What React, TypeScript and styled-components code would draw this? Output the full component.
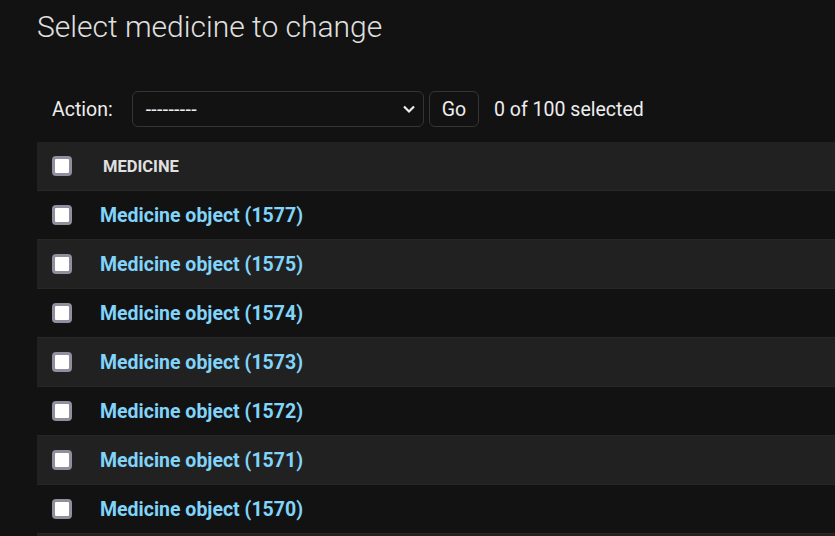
import React from "react";
import styled, { createGlobalStyle } from "styled-components";

const GlobalStyle = createGlobalStyle`
  html, body {
    margin: 0;
    padding: 0;
    background: #121212;
    overflow: hidden;
  }
  body {
    font-family: Roboto, "Liberation Sans", sans-serif;
    color: #eeeeee;
  }
`;

const Page = styled.div`
  width: 835px;
  height: 536px;
  overflow: hidden;
  background: #121212;
  padding: 9px 0 0 37px;
  box-sizing: border-box;
`;

const Title = styled.h1`
  margin: 0;
  font-weight: 300;
  font-size: 30px;
  line-height: 36px;
  color: #e0e0e0;
`;

const ActionsBar = styled.div`
  display: flex;
  align-items: center;
  height: 36px;
  margin-top: 46px;
  padding-left: 15px;
  font-size: 19.5px;
  color: #eeeeee;
`;

const Label = styled.span`
  margin-right: 19px;
`;

const SelectBox = styled.div`
  position: relative;
  box-sizing: border-box;
  width: 292px;
  height: 36px;
  border: 1px solid #353535;
  border-radius: 6px;
  background: #121212;
  display: flex;
  align-items: center;
  padding-left: 13px;
  font-size: 19.5px;
  letter-spacing: 0.3px;
  color: #eeeeee;
`;

const Chevron = styled.svg`
  position: absolute;
  right: 7px;
  top: 50%;
  margin-top: -5px;
`;

const GoButton = styled.div`
  box-sizing: border-box;
  height: 36px;
  margin-left: 5px;
  padding: 0 12px;
  border: 1px solid #353535;
  border-radius: 6px;
  background: #121212;
  display: flex;
  align-items: center;
  font-size: 19.5px;
  color: #eeeeee;
`;

const Counter = styled.span`
  margin-left: 15px;
`;

const Table = styled.div`
  margin-top: 15px;
  width: 900px;
`;

const Row = styled.div<{ $bg: string }>`
  display: flex;
  align-items: center;
  height: 49px;
  box-sizing: border-box;
  border-bottom: 1px solid #272727;
  background: ${(p) => p.$bg};
`;

const CheckCell = styled.div`
  width: 48px;
  box-sizing: border-box;
  padding-left: 15px;
  display: flex;
  align-items: center;
`;

const Check = styled.span`
  display: block;
  box-sizing: border-box;
  width: 20px;
  height: 20px;
  border: 3px solid #8f8f9d;
  border-radius: 4px;
  background: #ffffff;
`;

const HeaderText = styled.span`
  padding-left: 18px;
  font-size: 16.5px;
  font-weight: 700;
  color: #e0e0e0;
  text-transform: uppercase;
`;

const LinkText = styled.a`
  padding-left: 15px;
  font-size: 19.5px;
  font-weight: 700;
  color: #81d4fa;
  text-decoration: none;
`;

const ids = [1577, 1575, 1574, 1573, 1572, 1571, 1570];

export default function App() {
  return (
    <>
      <GlobalStyle />
      <Page>
        <Title>Select medicine to change</Title>
        <ActionsBar>
          <Label>Action:</Label>
          <SelectBox>
            ---------
            <Chevron width="14" height="10" viewBox="0 0 14 10">
              <path d="M2 2.5 L7 7.5 L12 2.5" fill="none" stroke="#eeeeee" strokeWidth="2.2" />
            </Chevron>
          </SelectBox>
          <GoButton>Go</GoButton>
          <Counter>0 of 100 selected</Counter>
        </ActionsBar>
        <Table>
          <Row $bg="#212121">
            <CheckCell>
              <Check />
            </CheckCell>
            <HeaderText>Medicine</HeaderText>
          </Row>
          {ids.map((id, i) => (
            <Row key={id} $bg={i % 2 === 0 ? "#121212" : "#212121"}>
              <CheckCell>
                <Check />
              </CheckCell>
              <LinkText href="#">Medicine object ({id})</LinkText>
            </Row>
          ))}
          <Row $bg="#212121" />
        </Table>
      </Page>
    </>
  );
}
